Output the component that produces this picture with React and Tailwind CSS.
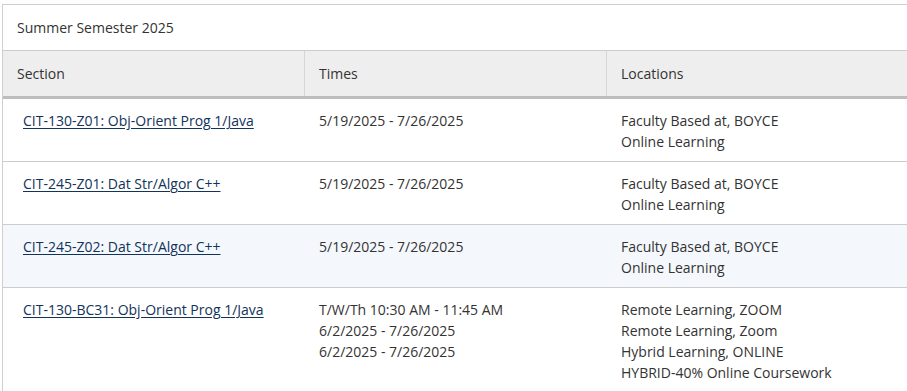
import React from 'react';

const rows = [
  {
    section: 'CIT-130-Z01: Obj-Orient Prog 1/Java',
    times: ['5/19/2025 - 7/26/2025'],
    locations: ['Faculty Based at, BOYCE', 'Online Learning'],
  },
  {
    section: 'CIT-245-Z01: Dat Str/Algor C++',
    times: ['5/19/2025 - 7/26/2025'],
    locations: ['Faculty Based at, BOYCE', 'Online Learning'],
  },
  {
    section: 'CIT-245-Z02: Dat Str/Algor C++',
    times: ['5/19/2025 - 7/26/2025'],
    locations: ['Faculty Based at, BOYCE', 'Online Learning'],
    highlight: true,
  },
  {
    section: 'CIT-130-BC31: Obj-Orient Prog 1/Java',
    times: ['T/W/Th 10:30 AM - 11:45 AM', '6/2/2025 - 7/26/2025', '6/2/2025 - 7/26/2025'],
    locations: [
      'Remote Learning, ZOOM',
      'Remote Learning, Zoom',
      'Hybrid Learning, ONLINE',
      'HYBRID-40% Online Coursework',
    ],
  },
];

function App() {
  return (
    <div
      className="w-[907px] h-[391px] overflow-hidden bg-white pl-[2px] pt-[4px] text-[14px] leading-[21px] text-[#333333]"
      style={{ fontFamily: '"Open Sans", "Noto Sans", sans-serif' }}
    >
      <div className="w-[915px] border-l border-t border-[#cfcfcf]">
        <div className="h-[45px] flex items-center pl-[14px]">Summer Semester 2025</div>

        <div className="grid grid-cols-[302px_302px_1fr] bg-[#eeeeee] border-t border-[#cccccc] border-b-[3px] border-b-[#bdbdbd]">
          <div className="h-[45px] flex items-center pl-[14px] border-r border-[#d6d6d6]">Section</div>
          <div className="h-[45px] flex items-center pl-[14px] border-r border-[#d6d6d6]">Times</div>
          <div className="h-[45px] flex items-center pl-[14px]">Locations</div>
        </div>

        {rows.map((row, i) => (
          <div
            key={i}
            className={
              'grid grid-cols-[302px_302px_1fr] pt-[11px] pb-[9px] ' +
              (i > 0 ? 'border-t border-[#cccccc] ' : '') +
              (row.highlight ? 'bg-[#f4f8fd]' : 'bg-white')
            }
          >
            <div className="pl-[20px]">
              <a href="#" className="text-[#12335a] underline underline-offset-2">
                {row.section}
              </a>
            </div>
            <div className="pl-[14px]">
              {row.times.map((t, j) => (
                <div key={j}>{t}</div>
              ))}
            </div>
            <div className="pl-[14px]">
              {row.locations.map((l, j) => (
                <div key={j}>{l}</div>
              ))}
            </div>
          </div>
        ))}
      </div>
    </div>
  );
}

export default App;
